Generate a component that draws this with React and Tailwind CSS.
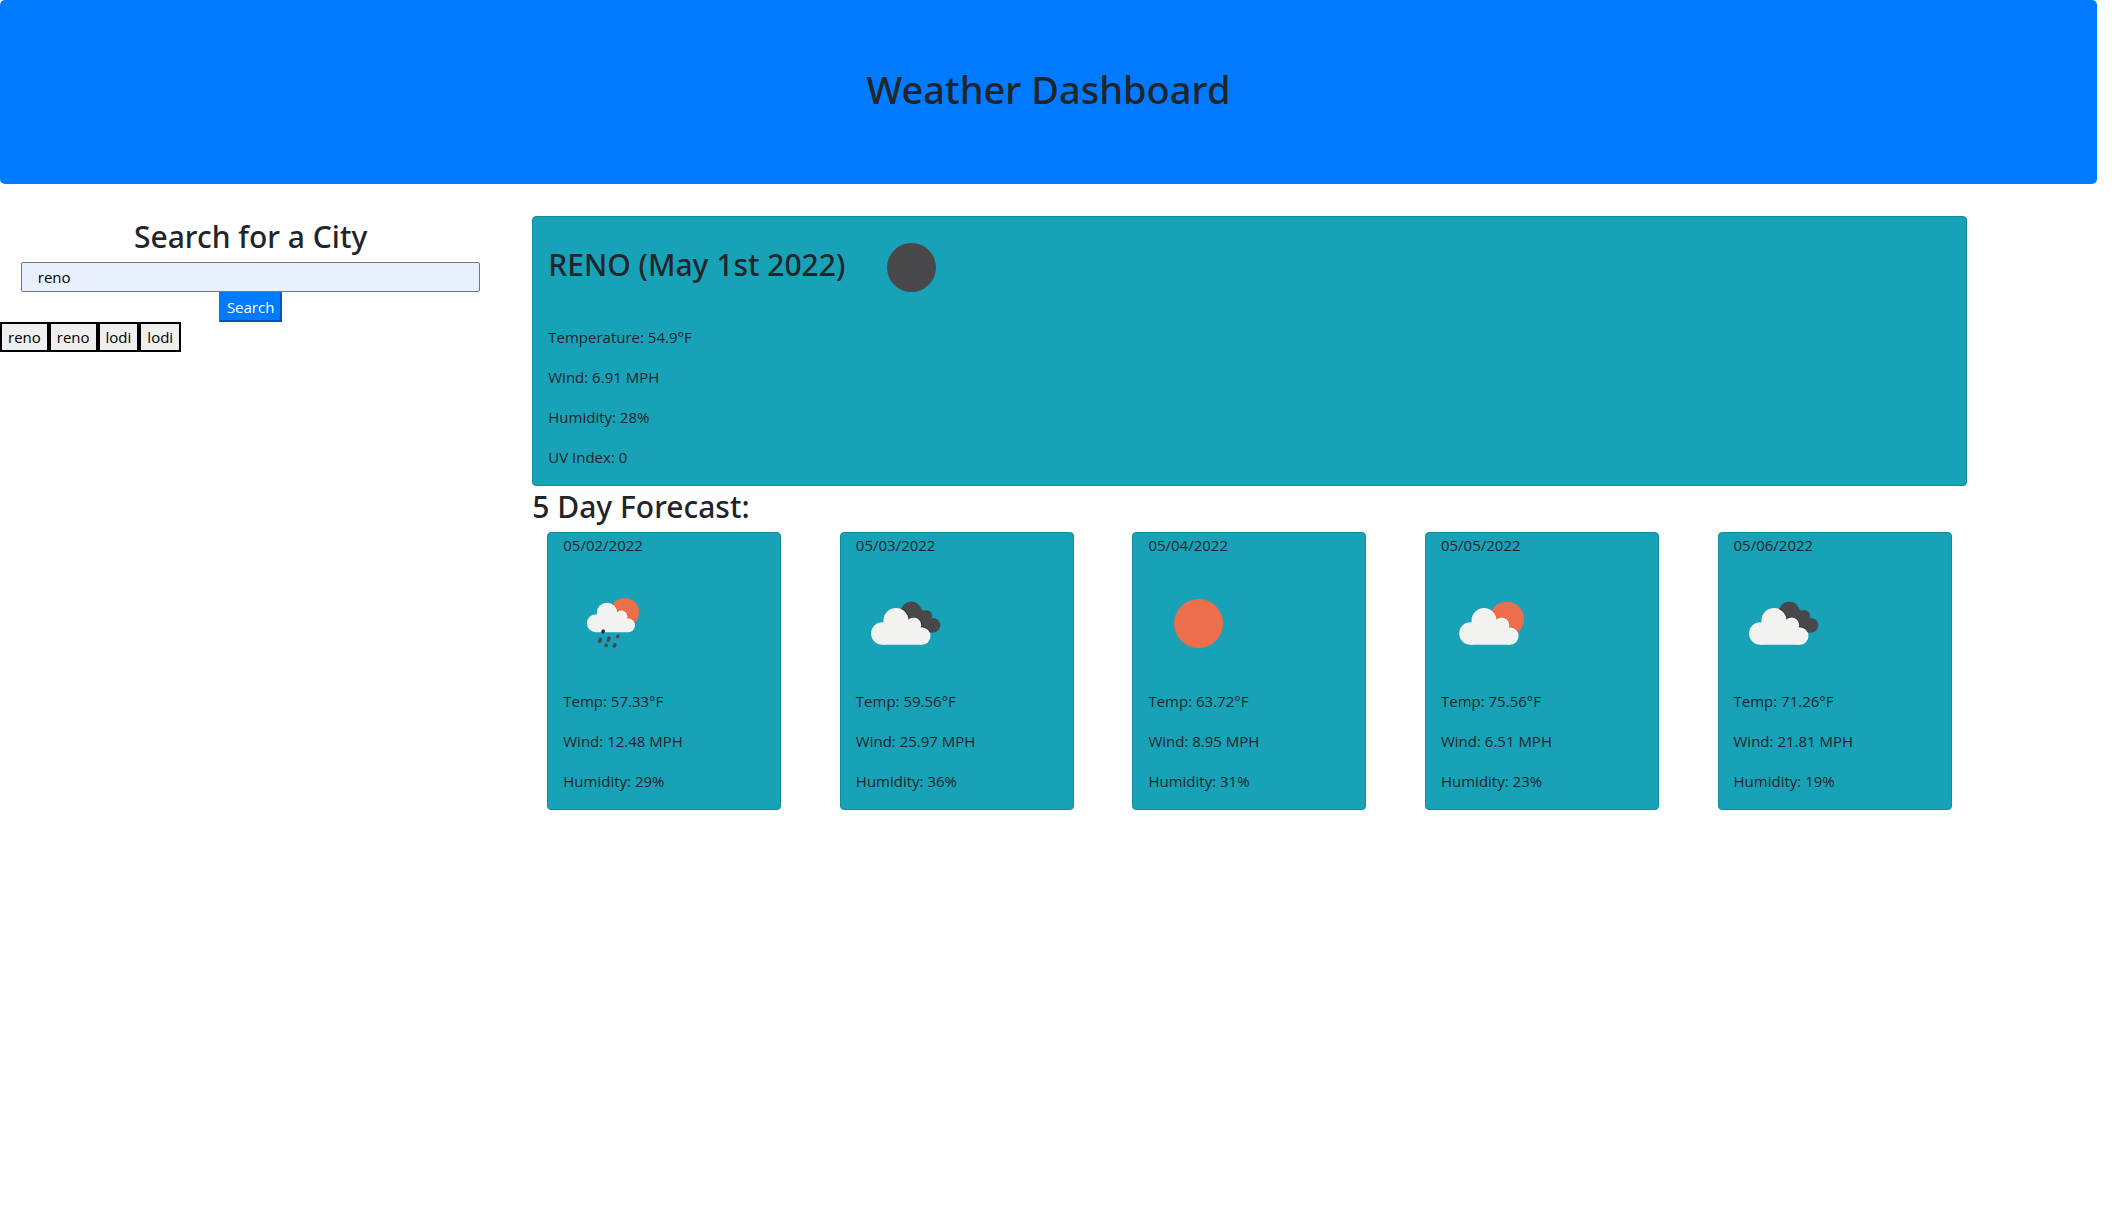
const forecast = [
  { date: "05/02/2022", icon: "rain", temp: "57.33", wind: "12.48", humidity: "29" },
  { date: "05/03/2022", icon: "overcast", temp: "59.56", wind: "25.97", humidity: "36" },
  { date: "05/04/2022", icon: "clear", temp: "63.72", wind: "8.95", humidity: "31" },
  { date: "05/05/2022", icon: "partly", temp: "75.56", wind: "6.51", humidity: "23" },
  { date: "05/06/2022", icon: "overcast", temp: "71.26", wind: "21.81", humidity: "19" },
];

const history = ["reno", "reno", "lodi", "lodi"];

function Cloud() {
  return (
    <>
      <circle cx="27" cy="60.5" r="11.2" />
      <circle cx="40.7" cy="47.7" r="12.6" />
      <circle cx="58.3" cy="52.3" r="7.7" />
      <circle cx="66.5" cy="63" r="8.7" />
      <path d="M27 71.7V56L40 48L58 52L66.5 60V71.7Z" />
    </>
  );
}

function DarkCloud() {
  return (
    <>
      <circle cx="56" cy="38.8" r="10.3" />
      <circle cx="71" cy="42.7" r="5.8" />
      <circle cx="77.8" cy="52.3" r="7.2" />
      <path d="M50 44L64 34L72 42L78 50V59.5H68Z" />
    </>
  );
}

function WeatherIcon({ kind }) {
  return (
    <svg viewBox="0 0 100 100" className="size-[100px] shrink-0" role="img" aria-label={kind}>
      {kind === "night" && <circle cx="50.5" cy="50.5" r="24.5" fill="#48484a" />}
      {kind === "clear" && <circle cx="50.5" cy="50.5" r="24.5" fill="#ec6e4c" />}
      {kind === "overcast" && (
        <g transform="translate(-.7 0)">
          <g fill="#48484a"><DarkCloud /></g>
          <clipPath id="dark-cloud">
            <circle cx="56" cy="38.8" r="10.3" />
            <circle cx="71" cy="42.7" r="5.8" />
            <circle cx="77.8" cy="52.3" r="7.2" />
            <path d="M50 44L64 34L72 42L78 50V59.5H68Z" />
          </clipPath>
          <g clipPath="url(#dark-cloud)" fill="#222224" stroke="#222224" strokeWidth="1.4">
            <Cloud />
          </g>
          <g fill="#f2f2f0"><Cloud /></g>
        </g>
      )}
      {kind === "partly" && (
        <>
          <circle cx="65.7" cy="46.2" r="17.4" fill="#ec6e4c" />
          <clipPath id="sun-large"><circle cx="65.7" cy="46.2" r="17.4" /></clipPath>
          <g clipPath="url(#sun-large)">
            <g transform="translate(2.4 0)" fill="#f04a24" stroke="#f04a24" strokeWidth="1.2"><Cloud /></g>
          </g>
          <g transform="translate(2.4 0)" fill="#f2f2f0"><Cloud /></g>
        </>
      )}
      {kind === "rain" && (
        <>
          <circle cx="61.7" cy="39.3" r="14.4" fill="#ec6e4c" />
          <clipPath id="sun-small"><circle cx="61.7" cy="39.3" r="14.4" /></clipPath>
          <g clipPath="url(#sun-small)">
            <g transform="translate(11.1 1.2) scale(.81)" fill="#f04a24" stroke="#f04a24" strokeWidth="1.4"><Cloud /></g>
          </g>
          <g transform="translate(11.1 1.2) scale(.81)" fill="#f2f2f0"><Cloud /></g>
          <g stroke="#48484a" strokeWidth="3.4" strokeLinecap="round">
            <path d="M37.4 66.3L36.6 68.3" />
            <path d="M46.1 65L45.1 67.4" />
            <path d="M54.9 63.2L54.7 63.7" />
            <path d="M43.3 72.2L43.1 72.6" />
            <path d="M52 71.6L51.2 73.2" />
            <path d="M40.2 58.2L39.9 59" stroke="#222224" />
          </g>
        </>
      )}
    </svg>
  );
}

export default function App() {
  return (
    <div className="min-h-screen bg-white pr-[15px] font-['Open_Sans',sans-serif] text-[15px] leading-6 text-[#212529]">
      <header className="mb-8 rounded-[5px] bg-[#007bff] px-8 pt-16 pb-[70px] text-center">
        <h1 className="font-['Noto_Sans',sans-serif] text-[38px] leading-[50px] font-medium">Weather Dashboard</h1>
      </header>

      <div className="flex items-start">
        <aside className="w-[24%]">
          <form className="flex flex-col items-center pr-0.5" onSubmit={(e) => e.preventDefault()}>
            <label
              htmlFor="city"
              className="mb-1 font-['Noto_Sans',sans-serif] text-[30px] leading-[42px] font-medium"
            >
              Search for a City
            </label>
            <input
              id="city"
              type="text"
              defaultValue="reno"
              className="h-[30px] w-[91.7%] rounded-xs border border-[#767676] bg-[#e8f0fe] px-4 text-black"
            />
            <button
              type="submit"
              className="h-[30px] border-2 border-t-[#007bff] border-r-[#0056b3] border-b-[#0056b3] border-l-[#007bff] bg-[#007bff] px-1.5 text-white"
            >
              Search
            </button>
          </form>
          <div className="flex">
            {history.map((city, i) => (
              <button key={i} type="button" className="h-[30px] border-2 border-black bg-[#efefef] px-1.5 text-black">
                {city}
              </button>
            ))}
          </div>
        </aside>

        <main className="ml-[29px] w-[68.4%]">
          <section className="rounded border border-[#148a9c] bg-[#17a2b8] px-[15px]">
            <div className="mb-2 flex items-center">
              <h2 className="mb-1 font-['Noto_Sans',sans-serif] text-[30px] leading-[42px] font-medium">
                RENO (May 1st 2022)
              </h2>
              <div className="ml-4">
                <WeatherIcon kind="night" />
              </div>
            </div>
            <p className="mb-4">Temperature: 54.9°F</p>
            <p className="mb-4">Wind: 6.91 MPH</p>
            <p className="mb-4">Humidity: 28%</p>
            <p className="mb-4">UV Index: 0</p>
          </section>

          <h2 className="mb-1 font-['Noto_Sans',sans-serif] text-[30px] leading-[42px] font-medium">5 Day Forecast:</h2>
          <div className="flex justify-between px-[15px]">
            {forecast.map((day) => (
              <section key={day.date} className="w-1/6 rounded border border-[#148a9c] bg-[#17a2b8] px-[15px]">
                <p className="mb-4">{day.date}</p>
                <div className="mb-4">
                  <WeatherIcon kind={day.icon} />
                </div>
                <p className="mb-4">Temp: {day.temp}°F</p>
                <p className="mb-4">Wind: {day.wind} MPH</p>
                <p className="mb-4">Humidity: {day.humidity}%</p>
              </section>
            ))}
          </div>
        </main>
      </div>
    </div>
  );
}
